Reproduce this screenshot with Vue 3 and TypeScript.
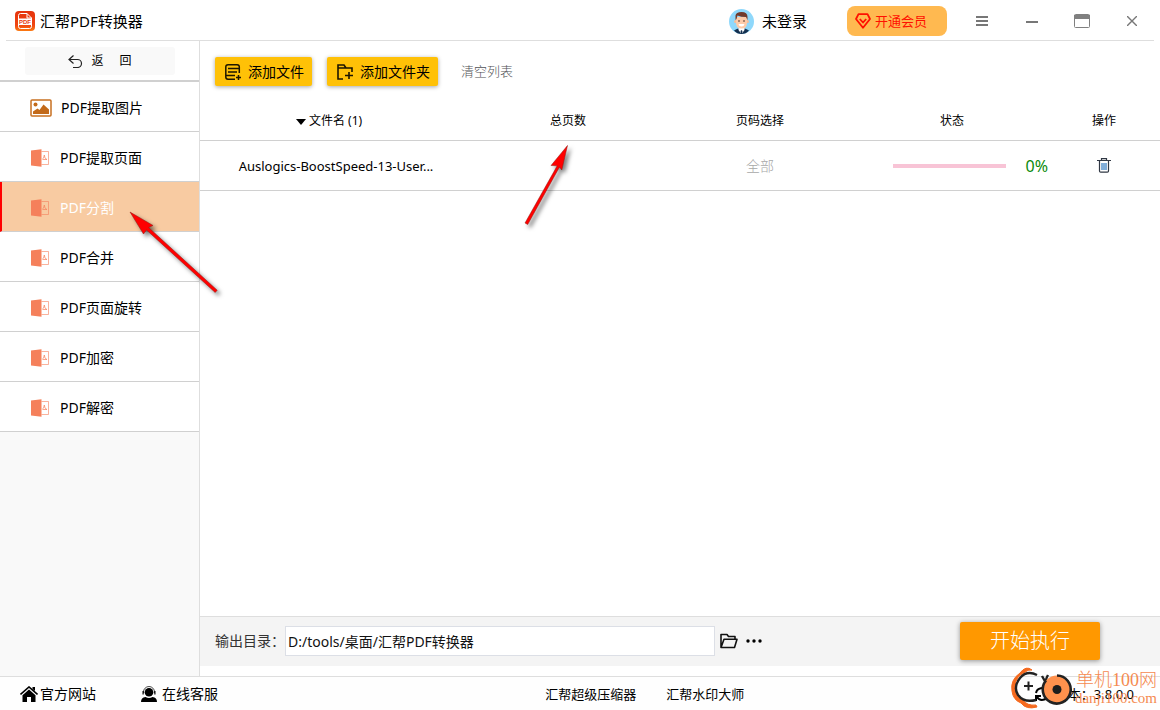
<script setup lang="ts">
import { ref } from 'vue'

interface QueueFile {
  name: string
  pages: string
  range: string
  progress: number
}

const tools = ['PDF提取图片', 'PDF提取页面', 'PDF分割', 'PDF合并', 'PDF页面旋转', 'PDF加密', 'PDF解密']
const active = ref(2)
const outputDir = ref('D:/tools/桌面/汇帮PDF转换器')
const files = ref<QueueFile[]>([
  { name: 'Auslogics-BoostSpeed-13-User...', pages: '', range: '全部', progress: 0 },
])
</script>

<template>
  <div class="app">
    <header class="titlebar">
      <svg class="logo" width="20" height="20" viewBox="0 0 20 20" aria-hidden="true">
        <defs>
          <linearGradient id="logo-fill" x1="0" y1="0" x2="0" y2="1">
            <stop offset="0" stop-color="#e5330c" />
            <stop offset=".7" stop-color="#ef4512" />
            <stop offset="1" stop-color="#fb7a12" />
          </linearGradient>
        </defs>
        <rect width="20" height="20" rx="4" fill="url(#logo-fill)" />
        <path d="M3.500 8V4.500Q3.500 2.500 5.500 2.500H12L16.500 7V8M12 2.500V7H16.500M3.500 14V15.500Q3.500 17.500 5.500 17.500H14.500Q16.500 17.500 16.500 15.500V14" fill="none" stroke="#fff" />
        <rect x="3" y="7.500" width="14" height="6.500" fill="#fff" />
        <text x="10" y="12.900" text-anchor="middle" class="logo-text">PDF</text>
      </svg>
      <h1>汇帮PDF转换器</h1>
      <button class="account">
        <svg width="25" height="25" viewBox="0 0 25 25" aria-hidden="true">
          <circle cx="12.500" cy="12.500" r="12.500" fill="#8fd8fb" />
          <path d="M5 21.500Q8 19 12.500 19T20 21.500Q17 25 12.500 25T5 21.500Z" fill="#14304f" />
          <path d="M9.500 18h6v3l-3 4-3-4z" fill="#fff" />
          <path d="M12.500 21l1 1-.5 3h-1l-.5-3z" fill="#14304f" />
          <circle cx="6.500" cy="12.500" r="1.500" fill="#f6bd98" />
          <circle cx="18.500" cy="12.500" r="1.500" fill="#f6bd98" />
          <path d="M7 8h11v6q0 5.500-5.500 5.500T7 14z" fill="#fdcba9" />
          <path d="M6.500 11V6.500Q7 3 12.500 3q6 0 6 5v3l-1.500-3Q12 8 8.500 6.500L7.500 10z" fill="#713a2b" />
          <circle cx="10" cy="12" r=".8" fill="#3b2723" />
          <circle cx="15" cy="12" r=".8" fill="#3b2723" />
          <path d="M9.500 15h6q-.5 2.500-3 2.500T9.500 15z" fill="#fff" />
        </svg>
        <span>未登录</span>
      </button>
      <button class="member">
        <svg width="16" height="16" viewBox="0 0 16 16" fill="none" stroke="#ff1000" stroke-width="1.800" stroke-linejoin="round" aria-hidden="true">
          <path d="M3.500 1.200h9L15 6 8 14.800 1 6z" />
          <path d="M4.800 6 8 9.500 11.200 6" />
        </svg>
        <span>开通会员</span>
      </button>
      <button class="win" aria-label="菜单">
        <svg width="12" height="10" viewBox="0 0 12 10"><path d="M0 1h12M0 5h12M0 9h12" stroke="#777" stroke-width="1.800" /></svg>
      </button>
      <button class="win" aria-label="最小化">
        <svg width="12" height="10" viewBox="0 0 12 10"><path d="M0 6h12" stroke="#777" stroke-width="2" /></svg>
      </button>
      <button class="win" aria-label="最大化">
        <svg width="16" height="14" viewBox="0 0 16 14"><rect x=".5" y=".5" width="15" height="13" rx="1" fill="#fff" stroke="#808080" /><path d="M0 1h16v4H0z" fill="#808080" /></svg>
      </button>
      <button class="win" aria-label="关闭">
        <svg width="10" height="10" viewBox="0 0 10 10"><path d="M0 0l10 10M10 0L0 10" stroke="#777" stroke-width="1.400" /></svg>
      </button>
    </header>

    <div class="body">
      <aside class="sidebar">
        <div class="back-wrap">
          <button class="back">
            <svg width="15" height="13" viewBox="0 0 15 13" fill="none" stroke="#222" stroke-width="1.200" aria-hidden="true">
              <path d="M5.500.5 1 4.500 5.500 8.500M1 4.500h8.500a4 4 0 0 1 0 8H5" />
            </svg>
            <span>返</span><span>回</span>
          </button>
        </div>
        <nav>
          <button v-for="(tool, i) in tools" :key="tool" class="tool" :class="{ active: i === active }" @click="active = i">
            <svg v-if="i === 0" width="22" height="18" viewBox="0 0 22 18" aria-hidden="true">
              <rect x="1" y="1" width="20" height="16" rx="1" fill="#fff" stroke="#c87020" stroke-width="1.500" />
              <circle cx="5.500" cy="5.500" r="2" fill="#c26a1a" />
              <path d="M3 15v-2.500l4.500-3 2 1.500 4-5.500L19 10.500V15z" fill="#c26a1a" />
            </svg>
            <svg v-else class="pdf" width="19" height="18" viewBox="0 0 19 18" aria-hidden="true">
              <path d="M10.500 2.500H17.500V15.500H10.500" fill="none" stroke="#f5805b" stroke-opacity=".6" />
              <path d="M11 10.500q2-.5 2.300-4.500 .2 4 2.700 4.500h-4" fill="none" stroke="#f5805b" stroke-opacity=".7" />
              <path d="M0 1.500 10.500.3V17.700L0 16.500z" fill="#f5805b" />
            </svg>
            <span>{{ tool }}</span>
          </button>
        </nav>
      </aside>

      <main>
        <div class="toolbar">
          <button class="add">
            <svg width="16" height="16" viewBox="0 0 16 16" fill="none" stroke="#1d1600" stroke-width="1.500" aria-hidden="true">
              <path d="M14.300 9V3q0-2.200-2.200-2.200H3Q.8.800.8 3v10q0 2.200 2.200 2.200h7M3 4.500h11M3 8h9M1 11.500h9M13.500 11v5M11 13.500h5" />
            </svg>
            <span>添加文件</span>
          </button>
          <button class="add">
            <svg width="16" height="16" viewBox="0 0 16 16" fill="none" stroke="#1d1600" stroke-width="1.600" aria-hidden="true">
              <path d="M6 15H1V1h6l2 3h6v4M1 4h8M12 8v7M8 11.500H16" />
            </svg>
            <span>添加文件夹</span>
          </button>
          <button class="clear">清空列表</button>
        </div>

        <table>
          <thead>
            <tr>
              <th class="name"><svg width="10" height="6" viewBox="0 0 10 6" aria-hidden="true"><path d="M0 0h10L5 6z" /></svg>文件名 ({{ files.length }})</th>
              <th>总页数</th>
              <th>页码选择</th>
              <th>状态</th>
              <th class="ops">操作</th>
            </tr>
          </thead>
          <tbody>
            <tr v-for="file in files" :key="file.name">
              <td class="file">{{ file.name }}</td>
              <td>{{ file.pages }}</td>
              <td class="range">{{ file.range }}</td>
              <td>
                <div class="status">
                  <progress :value="file.progress" max="100" aria-label="进度"></progress>
                  <span>{{ file.progress }}%</span>
                </div>
              </td>
              <td>
                <button class="trash" aria-label="删除">
                  <svg width="14" height="15" viewBox="0 0 14 15" fill="none" stroke="#303844" stroke-width="1.200">
                    <path d="M0 2.500h14M4.500 2.500V.6h5v1.900M2.500 3v10q0 1.200 1.200 1.200h6.600q1.200 0 1.200-1.200V3" />
                    <path d="M5 5v7M7 5v7M9 5v7" stroke="#3d83c5" stroke-width="1.300" />
                  </svg>
                </button>
              </td>
            </tr>
          </tbody>
        </table>

        <div class="output">
          <label for="outdir">输出目录：</label>
          <input id="outdir" v-model="outputDir" type="text" />
          <button class="plain" aria-label="打开目录">
            <svg width="18" height="16" viewBox="0 0 18 16" fill="none" stroke="#111" stroke-width="1.600" stroke-linejoin="round"><path d="M1 14.500V1.500H7l1.500 2H15v2.800M1 14.500 4 6.300H17L14.500 14.500z" /></svg>
          </button>
          <button class="plain" aria-label="更多">
            <svg width="16" height="4" viewBox="0 0 16 4"><circle cx="2" cy="2" r="1.700" /><circle cx="8" cy="2" r="1.700" /><circle cx="14" cy="2" r="1.700" /></svg>
          </button>
          <button class="run">开始执行</button>
        </div>
      </main>
    </div>

    <footer>
      <div class="links">
        <a href="#">
          <svg width="18" height="16" viewBox="0 0 18 16" aria-hidden="true">
            <path d="M.5 8.500 9 1l8.500 7.500" fill="none" stroke="#000" stroke-width="1.600" />
            <path d="M12.500 1h2.500v4l-2.500-2zM9 3.500l6.500 5.700V16h-4.500v-5H7v5H2.500V9.200z" />
          </svg>
          <span>官方网站</span>
        </a>
        <a href="#" class="service">
          <svg width="16" height="16" viewBox="0 0 16 16" aria-hidden="true">
            <path d="M2.500 7V6a5.500 5.500 0 0 1 11 0v1" fill="none" stroke="#000" stroke-width=".7" />
            <circle cx="8" cy="6.300" r="4.300" />
            <path d="M1.500 5h1.200v3.500H1.500zM13.300 5h1.200v3.500h-1.200zM0 16q0-4.500 4.500-5Q8 12.800 11.500 11 16 11.500 16 16z" />
          </svg>
          <span>在线客服</span>
        </a>
      </div>
      <div class="products">
        <a href="#">汇帮超级压缩器</a>
        <a href="#">汇帮水印大师</a>
      </div>
      <div class="version">
        <svg width="16" height="16" viewBox="0 0 16 16" fill="none" stroke="#000" stroke-width="2" aria-hidden="true"><path d="M2 7a6 6 0 0 1 11-2M14 9a6 6 0 0 1-11 2M14 1v5H9M2 15v-5h5" /></svg>
        <span>版本：3.8.0.0</span>
      </div>
    </footer>

    <svg class="arrow arrow-tool" width="100" height="96" viewBox="0 0 100 96" aria-hidden="true">
      <path d="M4 6 27 19.500 22.600 21.500 91.200 84.200 89.200 86.500 20.500 24 17.500 28z" fill="#f00" stroke="#8d1a12" stroke-width=".5" />
    </svg>
    <svg class="arrow arrow-pages" width="60" height="96" viewBox="0 0 60 96" aria-hidden="true">
      <path d="M47.500 4.500 41.800 29 39.500 26 7.700 83.500 5 82 37.200 24.800 31 24.500z" fill="#f00" stroke="#8d1a12" stroke-width=".5" />
    </svg>

    <div class="watermark">
      <svg width="64" height="44" viewBox="0 0 64 44" fill="none" aria-hidden="true">
        <path d="M21 4Q15-1 9 7-1 14 1 25 2 34 10 37 15 44 26 41L25 39Q16 40 12 34 3 29 4 20 5 10 13 7 17 3 21 4z" fill="#f56a1f" stroke="#f56a1f" />
        <path d="M26 9Q16 4 9 12 2 21 7 29 13 37 25 34" stroke="#222" stroke-width="2.400" />
        <path d="M13 20h9M17.500 15.500v9" stroke="#222" stroke-width="2" />
        <path d="M31 10l4 7M37 9q-3 5-3 12" stroke="#222" stroke-width="2.400" />
        <circle cx="46" cy="23.500" r="14" fill="#ff914d" />
        <path d="M46 9.500a14 14 0 1 1-11 5" stroke="#222" stroke-width="2.600" />
        <circle cx="46" cy="23.500" r="4.500" fill="#1d1d1d" />
      </svg>
      <div class="mark-text">
        <span class="mark-name">单机100网</span>
        <span class="mark-site">danji100.com</span>
      </div>
    </div>
  </div>
</template>

<style>
body {
  margin: 0;
}
</style>

<style scoped>
.app {
  position: relative;
  display: flex;
  flex-direction: column;
  box-sizing: border-box;
  min-height: 100vh;
  background: #fff;
  color: #000;
  font: 14px/20px "Noto Sans", "Noto Sans CJK SC", sans-serif;
  overflow: hidden;
}
.app * {
  box-sizing: border-box;
}
svg {
  display: block;
  flex: none;
}
button {
  display: flex;
  align-items: center;
  margin: 0;
  padding: 0;
  border: 0;
  background: none;
  color: inherit;
  font: inherit;
  white-space: nowrap;
}
a {
  color: inherit;
  text-decoration: none;
}
.titlebar {
  display: flex;
  align-items: center;
  height: 41px;
  margin: 0 6px;
  padding: 2px 0 0 9px;
  border-bottom: 1px solid #dedede;
}
.logo-text {
  font: bold 6px "Liberation Sans", sans-serif;
  fill: #e8380d;
}
h1 {
  margin: 0 auto 0 5px;
  font-size: 15px;
  font-weight: 400;
}
.account {
  gap: 8px;
  margin-right: 40px;
  font-size: 15px;
}
.member {
  gap: 4px;
  width: 100px;
  height: 30px;
  margin-right: 10px;
  padding-left: 8px;
  border-radius: 8px;
  background: #ffb950;
  color: #ff1000;
  font-size: 13px;
}
.win {
  justify-content: center;
  width: 50px;
  height: 38px;
}
.win:last-child {
  margin-right: -3px;
}
.body {
  display: flex;
  flex: 1;
}
.sidebar {
  flex: none;
  width: 200px;
  border-right: 1px solid #dedede;
  background: #f9f9f9;
}
.back-wrap {
  height: 41px;
  padding: 6px 24px 0 25px;
  border-bottom: 2px solid #d0d0d0;
  background: #fff;
}
.back {
  justify-content: center;
  gap: 8px;
  width: 100%;
  height: 28px;
  border-radius: 3px;
  background: #f9f9f9;
  font-size: 12px;
}
.back span + span {
  margin-left: 8px;
}
.tool {
  gap: 9px;
  width: 100%;
  height: 50px;
  padding: 2px 0 0 30px;
  border-bottom: 1px solid #d0d0d0;
  background: #fff;
}
.pdf {
  margin: 0 1px;
}
.tool.active {
  padding-left: 28px;
  border-left: 2px solid #f00;
  background: #f8cba2;
  color: #fff;
}
main {
  display: flex;
  flex: 1;
  flex-direction: column;
  min-width: 0;
}
.toolbar {
  display: flex;
  gap: 15px;
  padding: 16px 15px;
}
.add {
  gap: 7px;
  height: 29px;
  padding: 0 8px 0 10px;
  border-radius: 2px;
  background: #ffc107;
  box-shadow: 0 1px 4px rgba(0, 0, 0, 0.35);
}
.clear {
  height: 28px;
  padding-left: 8px;
  color: #505256;
  font-size: 13px;
  font-weight: 300;
}
table {
  width: 100%;
  border-collapse: separate;
  border-spacing: 0;
  table-layout: fixed;
  font-size: 12px;
  text-align: center;
}
th,
td {
  height: 50px;
  padding: 0;
  border-bottom: 1px solid #d0d0d0;
  font-weight: 400;
}
th {
  height: 39px;
  width: 20%;
}
th.name {
  width: auto;
  padding-right: 14px;
}
th.ops {
  width: 112px;
}
th svg {
  display: inline-block;
  margin-right: 3px;
  vertical-align: middle;
}
.file {
  font-size: 13px;
}
.range {
  color: #a8a8a8;
  font-size: 14px;
  font-weight: 300;
}
.status {
  display: flex;
  align-items: center;
  gap: 20px;
  padding-left: 37px;
  color: #0a8a0a;
  font-size: 16px;
}
progress {
  flex: 1;
  min-width: 0;
  height: 4px;
  border: 0;
  appearance: none;
  background: #f8c4d6;
}
progress::-webkit-progress-bar {
  background: #f8c4d6;
}
progress::-webkit-progress-value {
  background: #e91e63;
}
.trash {
  margin: 0 auto;
}
.output {
  display: flex;
  align-items: center;
  height: 50px;
  margin: auto 0 10px;
  padding: 0 60px 1px 15px;
  border-top: 1px solid #dedede;
  background: #f4f4f4;
}
label {
  flex: none;
  width: 70px;
  color: #333;
}
input {
  flex: 0 1 430px;
  min-width: 0;
  height: 30px;
  margin-right: 5px;
  padding: 0 2px;
  border: 1px solid #dcdfe6;
  background: #fff;
  color: #111;
  font: inherit;
}
.plain {
  margin-right: 8px;
}
.run {
  justify-content: center;
  width: 140px;
  height: 38px;
  margin-left: auto;
  border-radius: 2px;
  background: #ff9800;
  box-shadow: 0 1px 5px rgba(0, 0, 0, 0.4);
  color: #fff;
  font-size: 20px;
  font-weight: 300;
}
footer {
  display: grid;
  grid-template-columns: 47% 1fr auto;
  align-items: center;
  height: 34px;
  border-top: 1px solid #dedede;
  background: #fefefe;
}
.links,
.links a,
.products,
.version {
  display: flex;
  align-items: center;
}
.links {
  gap: 45px;
  padding-left: 20px;
}
.links a {
  gap: 2px;
}
.links .service {
  gap: 5px;
}
.products {
  gap: 30px;
  font-size: 13px;
}
.version {
  gap: 5px;
  padding-right: 26px;
  font-size: 13px;
}
.arrow {
  position: absolute;
  filter: drop-shadow(3px 3px 2px rgba(0, 0, 0, 0.5));
  pointer-events: none;
}
.arrow-tool {
  top: 206px;
  left: 126px;
}
.arrow-pages {
  top: 141px;
  left: 520px;
}
.watermark {
  position: absolute;
  right: 3px;
  bottom: 0;
  display: flex;
  align-items: center;
  color: #f58a50;
  pointer-events: none;
}
.mark-text {
  display: flex;
  flex-direction: column;
  align-items: flex-end;
  font-family: "Liberation Serif", "Noto Sans CJK SC", serif;
  font-weight: 300;
}
.mark-name {
  font-size: 18px;
}
.mark-site {
  font-size: 15px;
  line-height: 16px;
}
</style>
